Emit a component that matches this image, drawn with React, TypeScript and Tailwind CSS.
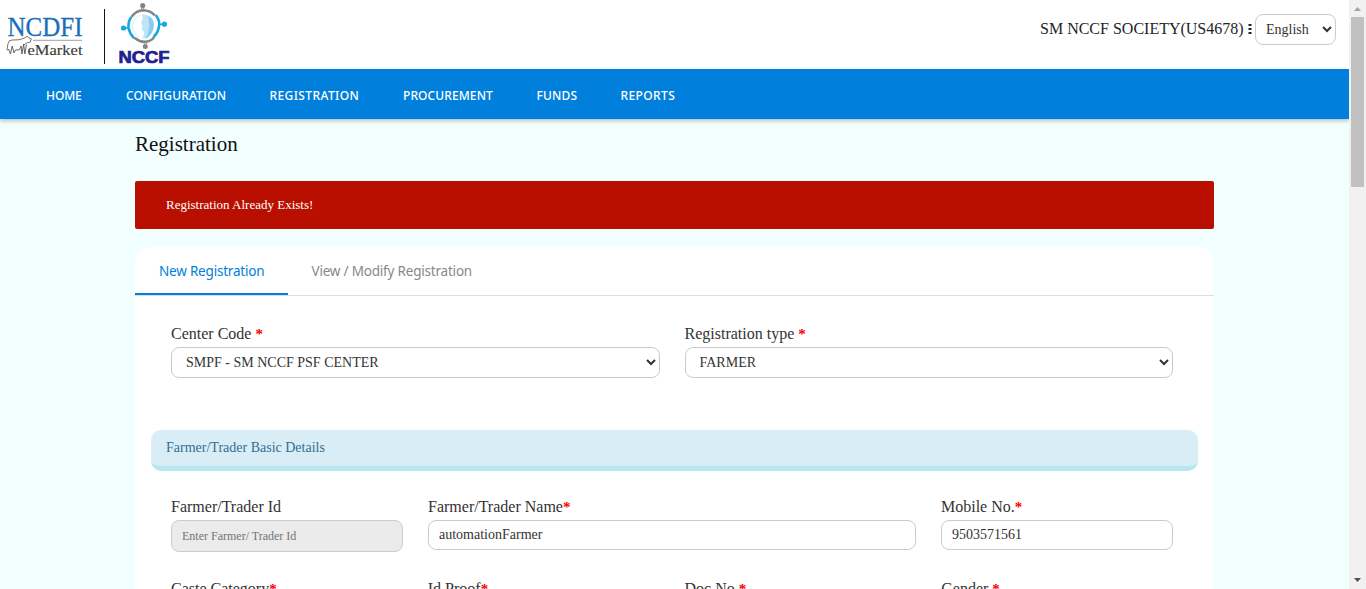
import React from "react";

const NAV = [
  { label: "HOME", width: "w-[80px]", tracking: "tracking-[-0.1px]" },
  { label: "CONFIGURATION", width: "w-[143.5px]", tracking: "tracking-[0.13px]" },
  { label: "REGISTRATION", width: "w-[133.5px]", tracking: "tracking-[0.4px]" },
  { label: "PROCUREMENT", width: "w-[133.5px]", tracking: "tracking-[0.1px]" },
  { label: "FUNDS", width: "w-[84px]", tracking: "tracking-[0.15px]" },
  { label: "REPORTS", width: "w-[84px]", tracking: "tracking-[0.4px]" },
];

function Label({ text, required, gap }: { text: string; required?: boolean; gap?: boolean }) {
  return (
    <div className="h-[22px] whitespace-nowrap text-[16px] leading-[22px] text-[#333]">
      {text}
      {gap ? " " : ""}
      {required && <span className="text-[15px] font-bold text-[#f00]">*</span>}
    </div>
  );
}

function Select({ value }: { value: string }) {
  return (
    <select className="block h-[31px] w-full rounded-[8px] border border-[#ccc] bg-white px-[10px] text-[14px] text-[#333]">
      <option>{value}</option>
    </select>
  );
}

function EMarketLogo() {
  return (
    <svg width="84" height="69" viewBox="0 0 84 69" className="shrink-0">
      <text x="7.5" y="36" fontFamily="'Liberation Serif', serif" fontSize="27" fill="#1b6fb8" stroke="#1b6fb8" strokeWidth="0.3" textLength="75" lengthAdjust="spacingAndGlyphs">NCDFI</text>
      <path d="M33 40.3H82" stroke="#888" strokeWidth="0.8" />
      <text x="27.5" y="54.8" fontFamily="'Liberation Serif', serif" fontSize="15" fill="#3c3c3c" stroke="#3c3c3c" strokeWidth="0.15" textLength="55" lengthAdjust="spacingAndGlyphs">eMarket</text>
      <path d="M7 49.5L8 43.5L9.3 40.8C13 39 17 40.8 21 39.2L25 37.8L27 36L28.4 37.8L31.3 38.8L30.4 42L26.5 43L24 45" fill="none" stroke="#666" strokeWidth="0.9" />
      <path d="M7 50L9 49.5L10.5 54L12.2 46L14 53L15.5 50L19.5 49.8L21 46L22 54L23.6 44L24.8 54L26.5 44.5" fill="none" stroke="#555" strokeWidth="0.9" />
    </svg>
  );
}

function NccfLogo() {
  return (
    <svg width="58" height="69" viewBox="114 0 58 69" className="shrink-0">
      <g fill="none" strokeWidth="2.6" strokeLinecap="round">
        <path d="M132.2 16Q136.5 10.4 142.8 10.2Q150 10.4 154 14.6" stroke="#858585" />
        <path d="M156.2 15.8Q159.6 20 159.2 25Q158.4 32.5 154 36.5" stroke="#18a9df" />
        <path d="M130.8 17.8Q127.8 22.5 128.6 28Q129.8 34 133.5 37.5" stroke="#18a9df" />
        <path d="M135.4 38.4Q139.5 41.8 144.8 41.8Q150.3 41.6 153.5 38" stroke="#858585" />
      </g>
      <circle cx="142.7" cy="5.6" r="2.6" fill="#858585" />
      <circle cx="145.3" cy="46.4" r="2.5" fill="#858585" />
      <circle cx="123.5" cy="28" r="2.6" fill="#18a9df" />
      <circle cx="164.4" cy="24.2" r="2.6" fill="#18a9df" />
      <path d="M141 9L142.7 7.5L144.4 9M143.5 43L145.2 44.5L147 43" fill="none" stroke="#858585" strokeWidth="1" />
      <path d="M126 28H128M160 24.3H162.5" stroke="#18a9df" strokeWidth="1.4" />
      <path d="M142 14.5Q151 14 153.8 22Q155 32 147 38.5L142 38Q145 35 143.8 31.5L141.8 30L142.5 26L141 23Q143.5 19 142 14.5Z" fill="#bfe4fa" />
      <path d="M148.8 15.8Q155.8 21 153 30Q150.5 36.3 145.5 38.7Q149.8 30 149.2 25Q148.2 20 148.8 15.8Z" fill="#87cdf3" />
      <path d="M140 15.4Q132.4 18.5 132.4 27Q133.4 34 139.2 37.6" fill="none" stroke="#cfeafa" strokeWidth="0.8" />
      <text x="118.5" y="63.3" fontFamily="'Liberation Sans', sans-serif" fontWeight="700" fontSize="16" fill="#211f91" stroke="#211f91" strokeWidth="0.7" textLength="51" lengthAdjust="spacingAndGlyphs">NCCF</text>
    </svg>
  );
}

function Header() {
  return (
    <header className="flex h-[69px] shrink-0 justify-between bg-white">
      <div className="flex">
        <EMarketLogo />
        <div className="mt-[9px] ml-[20px] h-[55px] w-px bg-[#111]" />
        <div className="ml-[9px]">
          <NccfLogo />
        </div>
      </div>
      <div className="mt-[14px] mr-[13px] flex h-[31px] items-center">
        <span className="mb-[2px] w-[208px] whitespace-nowrap text-[16px] leading-[28px] text-[#212529]">SM NCCF SOCIETY(US4678)</span>
        <svg width="4" height="12" viewBox="0 0 4 12" className="mr-[3px] mb-[2px] shrink-0">
          <path d="M0.5 1h3v2h-3zM0.5 5h3v2h-3zM0.5 9h3v2h-3z" fill="#222" />
        </svg>
        <select className="h-[31px] w-[81px] rounded-[8px] border border-[#ccc] bg-white px-[6px] text-[14px] text-[#333]">
          <option>English</option>
        </select>
      </div>
    </header>
  );
}

function ScrollBar() {
  return (
    <div className="flex h-full w-[17px] shrink-0 flex-col items-center justify-between bg-[#f1f1f1]">
      <div className="flex flex-col items-center">
        <svg width="17" height="17" viewBox="0 0 17 17">
          <path d="M5 11L8.5 7L12 11Z" fill="#a3a3a3" />
        </svg>
        <div className="h-[170px] w-[13px] bg-[#c1c1c1]" />
      </div>
      <svg width="17" height="17" viewBox="0 0 17 17">
        <path d="M5 6L12 6L8.5 10Z" fill="#505050" />
      </svg>
    </div>
  );
}

export default function App() {
  return (
    <div className="flex h-[589px] w-[1366px] overflow-hidden font-['Liberation_Serif',serif]">
      <div className="flex min-w-0 flex-1 flex-col bg-[#f2ffff]">
        <Header />
        <nav className="flex h-[50px] shrink-0 items-center bg-[#0080dc] pt-[3px] pl-[46px] font-['Noto_Sans',sans-serif] text-[12px] font-medium text-white shadow-[0_2px_4px_rgba(0,0,0,0.25)]">
          {NAV.map((n) => (
            <a key={n.label} className={`${n.width} ${n.tracking}`}>{n.label}</a>
          ))}
        </nav>
        <main className="ml-[135px] w-[1079px]">
          <h1 className="mt-[10px] text-[21px] leading-[30px] text-[#111]">Registration</h1>
          <div className="mt-[22px] flex h-[48px] items-center rounded-[2px] bg-[#b90f00] pl-[31px] text-[13px] text-white">
            Registration Already Exists!
          </div>
          <section className="mt-[18px] h-[400px] rounded-t-[15px] bg-white">
            <div className="flex h-[49px] border-b border-[#ddd] font-['Noto_Sans',sans-serif] text-[13.5px] leading-[48px] tracking-[-0.2px]">
              <div className="h-[48px] w-[153px] border-b-2 border-[#0080dc] pl-[24px] whitespace-nowrap text-[#0080dc]">New Registration</div>
              <div className="pl-[23.5px] text-[#888]">View / Modify Registration</div>
            </div>
            <div className="ml-[36px] mt-[27px] flex w-[1002px] gap-[25px]">
              <div className="flex-1">
                <Label text="Center Code" required gap />
                <div className="mt-[2px]"><Select value="SMPF - SM NCCF PSF CENTER" /></div>
              </div>
              <div className="flex-1">
                <Label text="Registration type" required gap />
                <div className="mt-[2px]"><Select value="FARMER" /></div>
              </div>
            </div>
            <div className="mx-[16px] mt-[52px] h-[41px] rounded-[10px] border-b-[5px] border-[#b8e8ef] bg-[#d9edf7] pl-[15px] text-[14px] leading-[35px] text-[#31708f]">
              Farmer/Trader Basic Details
            </div>
            <div className="mx-[36px] mt-[25px] flex gap-[25px]">
              <div className="w-[232px]">
                <Label text="Farmer/Trader Id" />
                <input disabled placeholder="Enter Farmer/ Trader Id" className="mt-[2px] block h-[32px] w-full rounded-[8px] border border-[#ccc] bg-[#ebebeb] px-[10px] text-[12px] placeholder:text-[#757575]" />
              </div>
              <div className="w-[488px]">
                <Label text="Farmer/Trader Name" required />
                <input defaultValue="automationFarmer" className="mt-[2px] block h-[30px] w-full rounded-[8px] border border-[#ccc] bg-white px-[10px] text-[14px] text-[#333]" />
              </div>
              <div className="w-[232px]">
                <Label text="Mobile No." required />
                <input defaultValue="9503571561" className="mt-[2px] block h-[30px] w-full rounded-[8px] border border-[#ccc] bg-white px-[10px] text-[14px] text-[#333]" />
              </div>
            </div>
            <div className="ml-[36px] mt-[26px] grid w-[1002px] grid-cols-4 gap-[25px]">
              <Label text="Caste Category" required />
              <Label text="Id Proof" required />
              <Label text="Doc No." required />
              <Label text="Gender" required gap />
            </div>
          </section>
        </main>
      </div>
      <ScrollBar />
    </div>
  );
}
